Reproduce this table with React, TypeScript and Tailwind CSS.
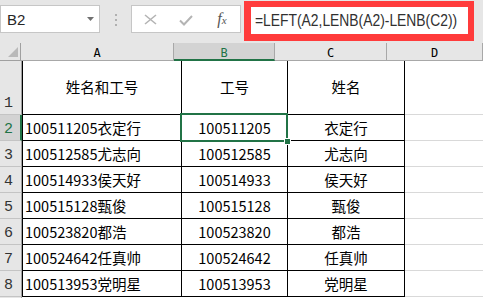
import React from "react";

const rows: [string, string, string][] = [
  ["100511205衣定行", "100511205", "衣定行"],
  ["100512585尤志向", "100512585", "尤志向"],
  ["100514933侯天好", "100514933", "侯天好"],
  ["100515128甄俊", "100515128", "甄俊"],
  ["100523820都浩", "100523820", "都浩"],
  ["100524642任真帅", "100524642", "任真帅"],
  ["100513953党明星", "100513953", "党明星"],
];

function FormulaBar() {
  return (
    <div className="h-[43px] shrink-0 bg-[#e6e6e6] flex">
      {/* name box */}
      <div className="mt-[5px] w-[100px] h-[28px] bg-white border border-[#c6c6c6] flex items-center pl-[6px] pr-[5px]">
        <span className="flex-1 text-[15px] leading-none text-[#262626] font-['Liberation_Sans',sans-serif]">
          B2
        </span>
        <svg width="7" height="4" viewBox="0 0 7 4">
          <polygon points="0,0 7,0 3.5,4" fill="#707070" />
        </svg>
      </div>
      {/* grip dots */}
      <div className="w-[31px] flex flex-col items-center pt-[14px] gap-[3px]">
        <span className="w-[2px] h-[2px] bg-[#b0b0b0]" />
        <span className="w-[2px] h-[2px] bg-[#b0b0b0]" />
        <span className="w-[2px] h-[2px] bg-[#b0b0b0]" />
      </div>
      {/* cancel / enter / insert function */}
      <div className="mt-[5px] w-[110px] h-[28px] bg-white border border-[#c6c6c6] flex items-center">
        <div className="w-[36px] flex justify-center">
          <svg width="13" height="11" viewBox="0 0 13 11">
            <path d="M1 1 L12 10 M12 1 L1 10" stroke="#b4b4b4" strokeWidth="1.6" fill="none" />
          </svg>
        </div>
        <div className="w-[36px] flex justify-center pt-[2px]">
          <svg width="14" height="11" viewBox="0 0 14 11">
            <path d="M1 5.5 L5 9.5 L13 1" stroke="#b4b4b4" strokeWidth="2" fill="none" />
          </svg>
        </div>
        <div className="w-[36px] flex justify-center items-baseline font-['Liberation_Serif',serif] italic text-[#555555]">
          <span className="text-[16px] leading-none">f</span>
          <span className="text-[11px] leading-none">x</span>
        </div>
      </div>
      {/* formula input, framed */}
      <div className="ml-[3px] mt-[1px] w-[230px] h-[40px] border-[6px] border-l-[7px] border-b-[7px] border-[#ff3b3b] bg-white flex items-center pl-[4px] overflow-hidden">
        <span className="block whitespace-nowrap origin-left scale-x-[0.84] text-[16.5px] leading-none text-[#303030] font-['Liberation_Sans',sans-serif]">
          =LEFT(A2,LENB(A2)-LENB(C2))
        </span>
      </div>
    </div>
  );
}

function ColumnHeaders() {
  const letter = "font-['DejaVu_Sans_Mono',monospace] text-[12px] leading-none";
  return (
    <div className="h-[18px] shrink-0 flex bg-[#e6e6e6]">
      <div className="w-[22px] h-full border-r border-b border-[#a0a0a0] flex items-end justify-end pr-[2px] pb-[3px]">
        <svg width="10" height="10" viewBox="0 0 10 10">
          <polygon points="10,0 10,10 0,10" fill="#b9b9b9" />
        </svg>
      </div>
      <div className={`w-[160px] h-full border-r border-b border-[#a8a8a8] flex items-center justify-center pt-[3px] text-black ${letter}`}>
        A
      </div>
      <div className={`w-[106px] h-full bg-[#d3d3d3] border-r border-r-[#a8a8a8] border-b-2 border-b-[#217346] flex items-center justify-center pt-[4px] text-[#217346] ${letter}`}>
        B
      </div>
      <div className={`w-[117px] h-full border-r border-b border-[#a8a8a8] flex items-center justify-center pt-[3px] text-black ${letter}`}>
        C
      </div>
      <div className={`w-[96px] shrink-0 h-full border-r border-b border-[#a8a8a8] flex items-center justify-center pt-[3px] text-black ${letter}`}>
        D
      </div>
    </div>
  );
}

function RowHeader({ n, active }: { n?: number; active?: boolean }) {
  return (
    <div
      className={
        "w-[22px] shrink-0 h-full border-b border-b-[#c4c4c4] flex items-end pl-[4px] pb-[3px] font-['Liberation_Mono',monospace] text-[15px] leading-none " +
        (active
          ? "bg-[#d3d3d3] border-r-2 border-r-[#217346] text-[#217346]"
          : "bg-[#e6e6e6] border-r border-r-[#a0a0a0] text-[#333333]")
      }
    >
      {n}
    </div>
  );
}

export default function App() {
  return (
    <div className="w-[483px] h-[298px] overflow-hidden bg-white flex flex-col font-['Noto_Sans_CJK_SC','Noto_Sans',sans-serif] text-black">
      <FormulaBar />
      <ColumnHeaders />

      {/* row 1: titles */}
      <div className="h-[54px] shrink-0 flex">
        <RowHeader n={1} />
        <div className="w-[160px] shrink-0 border-l border-r border-b border-black flex items-center justify-center text-[14.5px] leading-none">
          姓名和工号
        </div>
        <div className="w-[106px] shrink-0 border-r border-b border-black flex items-center justify-center text-[14.5px] leading-none">
          工号
        </div>
        <div className="w-[117px] shrink-0 border-r border-b border-black flex items-center justify-center text-[14.5px] leading-none">
          姓名
        </div>
        <div className="w-[96px] shrink-0 border-b border-[#d9d9d9]" />
      </div>

      {rows.map(([full, id, name], i) => {
        const selected = i === 0;
        return (
          <div key={id} className="h-[26px] shrink-0 flex">
            <RowHeader n={i + 2} active={selected} />
            <div className="w-[160px] shrink-0 border-l border-r border-b border-black flex items-center pl-[2px] pt-[1px] text-[14.5px] leading-none whitespace-nowrap">
              {full}
            </div>
            <div className="relative w-[106px] shrink-0 border-r border-b border-black flex items-center justify-center pt-[1px] text-[14.5px] leading-none">
              {id}
              {selected && (
                <>
                  <div className="absolute z-10 left-[-2px] top-[-2px] w-[108px] h-[29px] border-2 border-[#217346]" />
                  <div className="absolute z-20 left-[102px] top-[23px] w-[7px] h-[7px] bg-[#217346] border border-white" />
                </>
              )}
            </div>
            <div className="w-[117px] shrink-0 border-r border-b border-black flex items-center justify-center pt-[1px] text-[14.5px] leading-none">
              {name}
            </div>
            <div className="w-[96px] shrink-0 border-b border-[#d9d9d9]" />
          </div>
        );
      })}

      {/* the next row starts at the window's bottom edge */}
      <div className="h-[26px] shrink-0 flex">
        <RowHeader />
        <div className="flex-1" />
      </div>
    </div>
  );
}
